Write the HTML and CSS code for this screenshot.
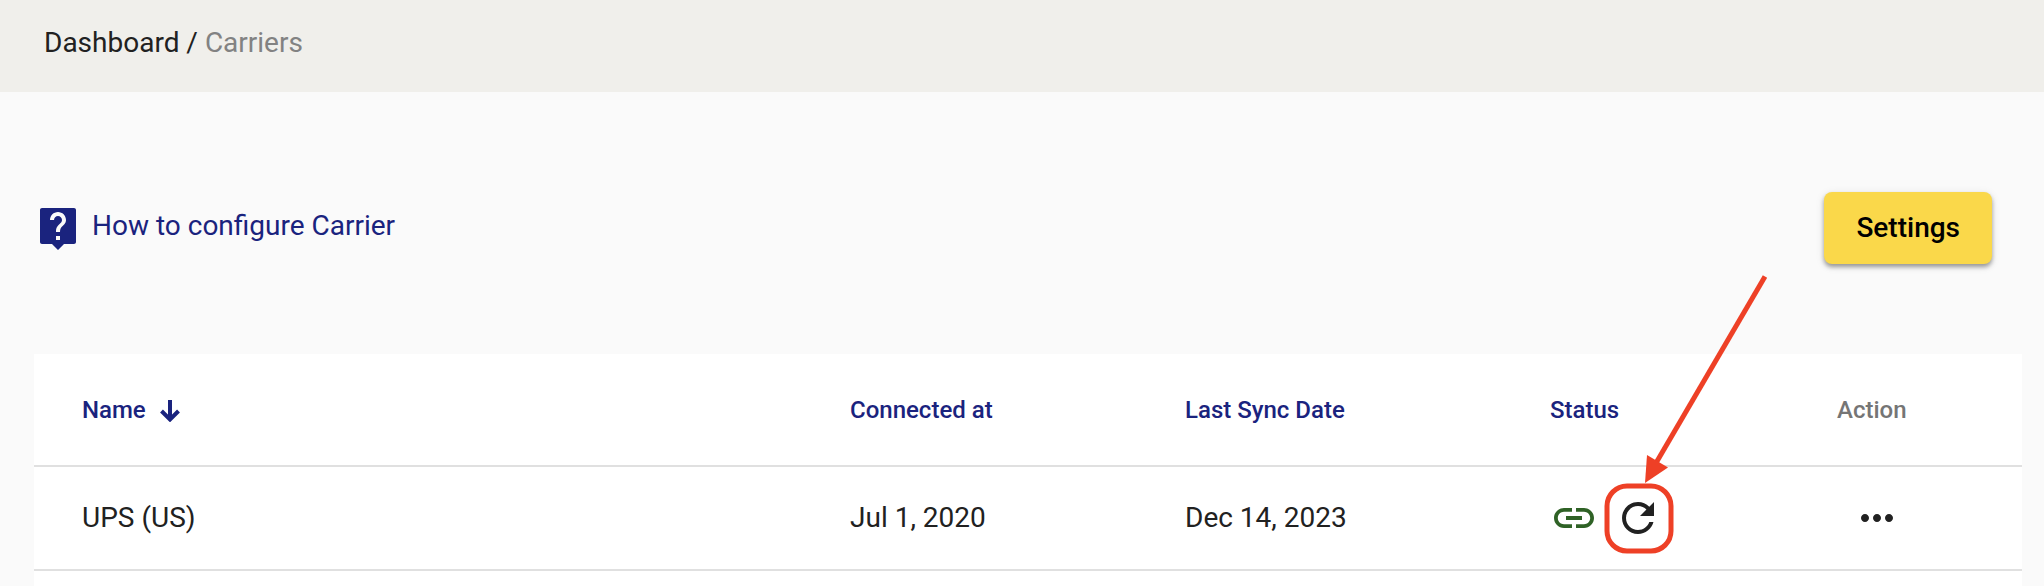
FILE: index.html
```
<!DOCTYPE html>
<html lang="en">
<head>
    <meta charset="UTF-8">
    <meta name="viewport" content="width=device-width, initial-scale=1.0">
    <title>Carriers</title>
    <link rel="stylesheet" href="styles.css">
</head>
<body>
    <nav class="breadcrumb">
        <a href="#">Dashboard</a> / <span class="current">Carriers</span>
    </nav>

    <main class="content">
        <div class="top-bar">
            <a class="help-link" href="#">
                <svg class="icon" viewBox="0 0 24 24"><path d="M20 2H4c-.55 0-1 .45-1 1v16c0 .55.45 1 1 1h5l3 3 3-3h5c.55 0 1-.45 1-1V3c0-.55-.45-1-1-1zm-7 16h-2v-2h2v2zm2.070-7.750l-.9.920C13.450 11.900 13 12.500 13 14h-2v-.5c0-1.100.450-2.100 1.170-2.830l1.240-1.260c.370-.360.590-.860.590-1.410 0-1.100-.9-2-2-2s-2 .9-2 2H8c0-2.210 1.790-4 4-4s4 1.790 4 4c0 .880-.360 1.680-.930 2.250z"/></svg>
                <span>How to configure Carrier</span>
            </a>
            <button class="settings-btn" type="button">Settings</button>
        </div>

        <div class="table-panel">
            <table>
                <thead>
                    <tr>
                        <th>
                            <button class="sort-btn" type="button">Name
                                <svg class="sort-icon" viewBox="0 0 24 24"><path d="M12 2v19M3.500 13l8.500 8.500 8.500-8.500"/></svg>
                            </button>
                        </th>
                        <th class="col-connected"><button class="sort-btn" type="button">Connected at</button></th>
                        <th class="col-sync"><button class="sort-btn" type="button">Last Sync Date</button></th>
                        <th class="col-status"><button class="sort-btn" type="button">Status</button></th>
                        <th class="col-action">Action</th>
                    </tr>
                </thead>
                <tbody>
                    <tr>
                        <td>UPS (US)</td>
                        <td>Jul 1, 2020</td>
                        <td>Dec 14, 2023</td>
                        <td>
                            <div class="status">
                                <svg class="icon linked" viewBox="0 0 24 24"><path d="M3.900 12c0-1.710 1.390-3.100 3.100-3.100h4V7H7c-2.760 0-5 2.240-5 5s2.240 5 5 5h4v-1.900H7c-1.710 0-3.100-1.390-3.100-3.100zM8 13h8v-2H8v2zm9-6h-4v1.900h4c1.710 0 3.100 1.390 3.100 3.100s-1.390 3.100-3.100 3.100h-4V17h4c2.760 0 5-2.240 5-5s-2.240-5-5-5z"/></svg>
                                <div class="refresh">
                                    <button class="icon-btn" type="button" aria-label="Refresh">
                                        <svg class="icon" viewBox="0 0 24 24"><path d="M17.650 6.350C16.200 4.900 14.210 4 12 4c-4.420 0-7.990 3.580-7.990 8s3.570 8 7.990 8c3.730 0 6.840-2.550 7.730-6h-2.080c-.820 2.330-3.040 4-5.650 4-3.310 0-6-2.690-6-6s2.690-6 6-6c1.660 0 3.140.690 4.220 1.780L13 11h7V4l-2.350 2.350z"/></svg>
                                    </button>
                                    <!-- callout arrow and ring -->
                                    <svg class="callout" viewBox="0 0 180 290">
                                        <rect x="7" y="216" width="64" height="65" rx="20"/>
                                        <path d="M165 6.500L56 193"/>
                                        <polygon points="45,213 47,185 68,197.500"/>
                                    </svg>
                                </div>
                            </div>
                        </td>
                        <td>
                            <button class="icon-btn more-btn" type="button" aria-label="More actions">
                                <svg class="icon" viewBox="0 0 24 24"><path d="M6 10c-1.100 0-2 .9-2 2s.9 2 2 2 2-.9 2-2-.9-2-2-2zm12 0c-1.100 0-2 .9-2 2s.9 2 2 2 2-.9 2-2-.9-2-2-2zm-6 0c-1.100 0-2 .9-2 2s.9 2 2 2 2-.9 2-2-.9-2-2-2z"/></svg>
                            </button>
                        </td>
                    </tr>
                </tbody>
            </table>
        </div>
    </main>
</body>
</html>
```
FILE: styles.css
```
* {
    box-sizing: border-box;
}
body {
    display: flex;
    flex-direction: column;
    min-height: 100vh;
    margin: 0;
    background-color: #fafafa;
    color: #212121;
    font-family: Roboto, "Liberation Sans", sans-serif;
    font-size: 28px;
    line-height: 32px;
}
a {
    color: inherit;
    text-decoration: none;
}
button {
    border: none;
    background: none;
    font-family: inherit;
    cursor: pointer;
}
.breadcrumb {
    padding: 27px 44px 33px;
    background-color: #f0efeb;
}
.current {
    color: #828282;
}
.content {
    display: flex;
    flex: 1;
    flex-direction: column;
    padding: 100px 22px 0 34px;
}
.top-bar {
    display: flex;
    justify-content: space-between;
    align-items: flex-start;
    margin-bottom: 90px;
    padding-right: 30px;
}
.help-link {
    display: flex;
    gap: 10px;
    padding-top: 12px;
    color: #1a237e;
    line-height: 44px;
}
.icon {
    display: block;
    width: 48px;
    height: 48px;
    fill: currentColor;
}
.settings-btn {
    padding: 20px 32px;
    border-radius: 8px;
    background-color: #fad84a;
    box-shadow: 0 3px 4px rgba(0, 0, 0, 0.35), 0 2px 10px rgba(0, 0, 0, 0.1);
    color: #000;
    font-size: 28px;
    font-weight: 500;
    line-height: 32px;
}
.table-panel {
    flex: 1;
    background-color: #fff;
}
table {
    width: 100%;
    border-collapse: separate;
    border-spacing: 0;
    table-layout: fixed;
}
th, td {
    padding: 0;
    border-bottom: 2px solid #e0e0e0;
    text-align: left;
}
th {
    height: 113px;
    color: #757575;
    font-size: 24px;
    font-weight: 500;
}
td {
    height: 104px;
}
th:first-child, td:first-child {
    padding-left: 48px;
}
.col-connected {
    width: 335px;
}
.col-sync {
    width: 365px;
}
.col-status {
    width: 287px;
}
.col-action {
    width: 185px;
}
.sort-btn {
    display: flex;
    align-items: center;
    gap: 12px;
    padding: 0;
    color: #1a237e;
    font-size: 24px;
    font-weight: 500;
    line-height: 32px;
}
.sort-icon {
    width: 24px;
    height: 24px;
    fill: none;
    stroke: currentColor;
    stroke-width: 4;
}
.status {
    display: flex;
    gap: 16px;
}
.linked {
    color: #2f6226;
}
.refresh {
    position: relative;
}
.icon-btn {
    display: block;
    padding: 0;
    color: #212121;
}
.more-btn {
    margin-left: 16px;
}
.callout {
    position: absolute;
    bottom: -18px;
    left: -14px;
    width: 180px;
    height: 290px;
    fill: none;
    stroke: #ee4026;
    stroke-width: 5;
    pointer-events: none;
}
.callout polygon {
    fill: #ee4026;
    stroke: none;
}
```
